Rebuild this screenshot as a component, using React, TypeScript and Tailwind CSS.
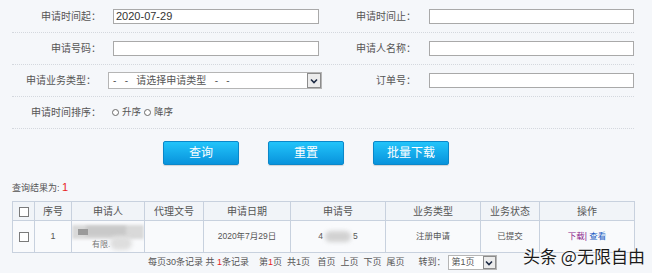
import React from "react";

const font = "font-['Liberation_Sans','Noto_Sans_CJK_SC',sans-serif]";

function Field({ value = "", width }: { value?: string; width: string }) {
  return (
    <div
      className={`${width} h-[15px] border border-[#a9a9a9] bg-white text-[11px] leading-[13px] text-[#333] pl-[2px]`}
    >
      {value}
    </div>
  );
}

function Check() {
  return <span className="inline-block w-[10px] h-[10px] border border-[#7a7a7a] bg-white align-middle" />;
}

function Radio({ label }: { label: string }) {
  return (
    <span className="inline-flex items-center">
      <span className="w-[7px] h-[7px] rounded-full border border-[#6a6a6a] bg-white mr-[3px]" />
      {label}
    </span>
  );
}

function BlueButton({ children }: { children: React.ReactNode }) {
  return (
    <button className="w-[76px] h-6 rounded-[2px] border border-[#0b87c9] bg-gradient-to-b from-[#22c4fa] to-[#0893dc] text-white text-[12px] shadow-[0_1px_1px_rgba(0,0,0,0.15)]">
      {children}
    </button>
  );
}

const cols = [22, 37, 73, 59, 87, 95, 95, 59, 95];
const heads = ["", "序号", "申请人", "代理文号", "申请日期", "申请号", "业务类型", "业务状态", "操作"];

export default function App() {
  return (
    <div className={`relative w-[652px] h-[273px] overflow-hidden bg-[#f5f7fa] text-[#555] ${font}`}>
      {/* search form */}
      <div className="ml-3 w-[622px] pt-px text-[10px]">
        <div className="flex items-center h-8 border-b border-dotted border-[#d4d8de]">
          <div className="flex items-center w-[310px]">
            <span className="w-[89px] text-right">申请时间起：</span>
            <div className="ml-3">
              <Field value="2020-07-29" width="w-[206px]" />
            </div>
          </div>
          <span className="w-[94px] text-right">申请时间止：</span>
          <div className="ml-[13px]">
            <Field width="w-[205px]" />
          </div>
        </div>
        <div className="flex items-center h-8 border-b border-dotted border-[#d4d8de]">
          <div className="flex items-center w-[310px]">
            <span className="w-[89px] text-right">申请号码：</span>
            <div className="ml-3">
              <Field width="w-[206px]" />
            </div>
          </div>
          <span className="w-[94px] text-right">申请人名称：</span>
          <div className="ml-[13px]">
            <Field width="w-[205px]" />
          </div>
        </div>
        <div className="flex items-center h-8 border-b border-dotted border-[#d4d8de]">
          <div className="flex items-center w-[310px]">
            <span className="w-[89px] text-right">申请业务类型：</span>
            <div className="ml-3 flex w-[214px] h-[17px] border border-[#b5b5b5] bg-white shrink-0">
              <span className="flex-1 pl-[4px] leading-[15px] whitespace-pre text-[#555]">-   -   请选择申请类型   -   -</span>
              <span className="w-[14px] h-[15px] border border-[#8c8c8c] bg-[#ececec] flex items-center justify-center">
                <svg width="8" height="6" viewBox="0 0 8 6">
                  <polyline points="1,1.5 4,4.5 7,1.5" fill="none" stroke="#1d2a44" strokeWidth="1.6" />
                </svg>
              </span>
            </div>
          </div>
          <span className="w-[94px] text-right">订单号：</span>
          <div className="ml-[13px]">
            <Field width="w-[205px]" />
          </div>
        </div>
        <div className="flex items-center h-8 border-b border-dotted border-[#d4d8de]">
          <span className="w-[89px] text-right">申请时间排序：</span>
          <div className="ml-[11px] flex items-center gap-[3px] text-[9.5px]">
            <Radio label="升序" />
            <Radio label="降序" />
          </div>
        </div>
      </div>

      {/* buttons */}
      <div className="flex mt-3 ml-[163px] gap-[29px]">
        <BlueButton>查询</BlueButton>
        <BlueButton>重置</BlueButton>
        <BlueButton>批量下载</BlueButton>
      </div>

      <div className="ml-3 pt-[15px] leading-[14px] text-[9px]">
        查询结果为: <span className="text-[#e8231f] text-[11px]">1</span>
      </div>

      {/* result table */}
      <table className="ml-3 mt-[6px] table-fixed border-collapse w-[622px] text-center">
        <colgroup>
          {cols.map((w, i) => (
            <col key={i} style={{ width: w }} />
          ))}
        </colgroup>
        <thead>
          <tr className="h-[19px] bg-[#f1f4f8] text-[10px]">
            {heads.map((h, i) => (
              <th key={i} className="border border-[#c8d1de] font-normal p-0">
                {i === 0 ? <Check /> : h}
              </th>
            ))}
          </tr>
        </thead>
        <tbody>
          <tr className="h-[32px] bg-[#f9fafc] text-[8.5px]">
            <td className="border border-[#c8d1de] p-0">
              <Check />
            </td>
            <td className="border border-[#c8d1de] p-0 text-[9px]">1</td>
            <td className="border border-[#c8d1de] p-0">
              <div className="relative h-[30px] overflow-hidden">
                <div className="absolute left-0 top-[3px] w-[72px] h-[14px] bg-[#d9d9d9] blur-[1.5px]" />
                <div className="absolute left-[14px] top-[4px] w-[40px] h-[10px] bg-[#c9c9c9] blur-[1.5px]" />
                <div className="absolute left-[6px] top-[7px] w-[10px] h-[6px] bg-[#9a9a9a] blur-[0.5px]" />
                <div className="absolute left-[38px] top-[14px] w-[22px] h-[14px] rounded-full bg-[#dedede] blur-[2px]" />
                <span className="absolute left-[20px] top-[17px] text-[8px] text-[#777]">有限.</span>
              </div>
            </td>
            <td className="border border-[#c8d1de] p-0" />
            <td className="border border-[#c8d1de] p-0">2020年7月29日</td>
            <td className="border border-[#c8d1de] p-0">
              <span className="inline-flex items-center">
                4
                <span className="inline-block w-[26px] h-[11px] mx-[2px] rounded-full bg-[#d2d2d2] blur-[2px]" />
                5
              </span>
            </td>
            <td className="border border-[#c8d1de] p-0">注册申请</td>
            <td className="border border-[#c8d1de] p-0">已提交</td>
            <td className="border border-[#c8d1de] p-0">
              <span className="text-[#8b1a8b]">下载|</span> <span className="text-[#1c5fc4]">查看</span>
            </td>
          </tr>
        </tbody>
      </table>

      {/* pagination */}
      <div className="flex items-center h-[17px] ml-[148px] mt-px text-[9px] whitespace-pre">
        <span>每页30条记录 共 </span>
        <span className="text-[#e8231f]">1</span>
        <span>条记录  </span>
        <span className="ml-[5px]">第</span>
        <span className="text-[#e8231f]">1</span>
        <span>页  共1页   首页  上页  下页  尾页</span>
        <span className="ml-[14px]">转到：</span>
        <div className="ml-[2px] flex w-[49px] h-[15px] border border-[#b5b5b5] bg-white">
          <span className="flex-1 pl-[3px] leading-[13px]">第1页</span>
          <span className="w-[13px] h-[13px] border border-[#8c8c8c] bg-[#ececec] flex items-center justify-center">
            <svg width="8" height="6" viewBox="0 0 8 6">
              <polyline points="1,1.5 4,4.5 7,1.5" fill="none" stroke="#1d2a44" strokeWidth="1.6" />
            </svg>
          </span>
        </div>
      </div>

      {/* watermark */}
      <div className="absolute left-[523px] top-[245px] text-[17px] leading-[22px] text-[#1b1b1b] font-['Noto_Sans_CJK_SC',sans-serif] [text-shadow:0_0_2px_#fff,0_0_2px_#fff]">
        头条 @无限自由
      </div>
    </div>
  );
}
